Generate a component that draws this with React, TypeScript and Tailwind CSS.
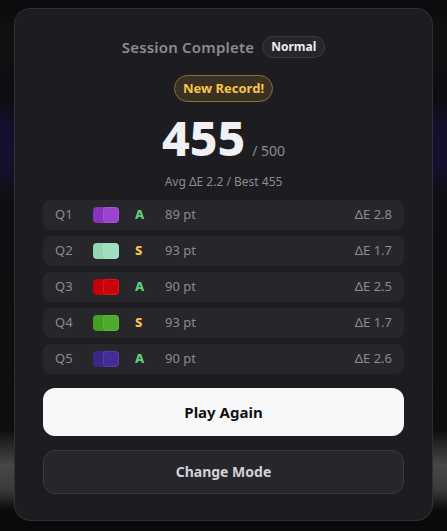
const rounds = [
  { q: "Q1", a: "#8a34bd", b: "#9a44cf", grade: "A", pt: 89, de: "2.8" },
  { q: "Q2", a: "#93d6b1", b: "#a0dfbe", grade: "S", pt: 93, de: "1.7" },
  { q: "Q3", a: "#c40008", b: "#d00008", grade: "A", pt: 90, de: "2.5" },
  { q: "Q4", a: "#44a024", b: "#4eaa2a", grade: "S", pt: 93, de: "1.7" },
  { q: "Q5", a: "#3a2888", b: "#432c96", grade: "A", pt: 90, de: "2.6" },
]

export default function App() {
  return (
    <div
      className="min-h-[531px] w-full bg-[linear-gradient(180deg,#0b0b0d_0px,#111112_40px,#0d0d10_100px,#150f2c_125px,#160f2e_165px,#0f0f11_200px,#0e0e0f_430px,#474747_465px,#3a3a3a_490px,#0a0a0a_510px)] px-[13px] py-2"
      style={{ fontFamily: '"Noto Sans", "Open Sans", sans-serif' }}
    >
      <div className="mx-auto w-[419px] rounded-2xl border border-[#2f2f35] bg-[#1d1d21] px-7 pb-[26px] pt-[27px]">
        {/* Header */}
        <div className="flex items-center justify-center gap-2">
          <h2 className="text-[15px] font-semibold tracking-[0.2px] text-[#8b8b91]">Session Complete</h2>
          <span className="rounded-full border border-[#3a3a41] bg-[#26262b] px-2 py-[2px] text-xs font-bold text-[#ececf0]">
            Normal
          </span>
        </div>

        <div className="mt-4 flex justify-center">
          <span className="rounded-full border border-[#8d7035] bg-[#3b3122] px-2 py-[3px] text-[13px] font-bold text-[#f6c54a]">
            New Record!
          </span>
        </div>

        {/* Score */}
        <div className="mt-[3px] flex items-baseline justify-center gap-[7px]">
          <span className="text-[48px] font-extrabold leading-[66px] text-[#f1f1f5]">455</span>
          <span className="text-sm text-[#8b8b91]">/ 500</span>
        </div>
        <p className="mt-[3px] text-center text-xs text-[#8b8b91]">Avg ΔE 2.2 / Best 455</p>

        {/* Rounds */}
        <div className="mt-[10px] flex flex-col gap-[6px]">
          {rounds.map((r) => (
            <div key={r.q} className="flex h-[30px] items-center rounded-lg bg-[#26262b] px-3 text-[13px] text-[#8b8b91]">
              <span className="w-[38px]">{r.q}</span>
              <span className="relative h-4 w-[26px]">
                <span className="absolute left-0 top-0 h-4 w-4 rounded-[4px]" style={{ backgroundColor: r.a }} />
                <span
                  className="absolute left-[10px] top-0 h-4 w-4 rounded-[4px] border border-white/10"
                  style={{ backgroundColor: r.b }}
                />
              </span>
              <span
                className={
                  r.grade === "S"
                    ? "ml-4 w-[30px] font-extrabold text-[#f6c54a]"
                    : "ml-4 w-[30px] font-extrabold text-[#5ed27b]"
                }
              >
                {r.grade}
              </span>
              <span>{r.pt} pt</span>
              <span className="ml-auto">ΔE {r.de}</span>
            </div>
          ))}
        </div>

        {/* Actions */}
        <button className="mt-[14px] h-12 w-full rounded-xl bg-[#f8f8f8] text-[15px] font-bold text-[#111114]">
          Play Again
        </button>
        <button className="mt-[14px] h-11 w-full rounded-xl border border-[#38383f] bg-[#26262b] text-sm font-bold text-[#d2d2d8]">
          Change Mode
        </button>
      </div>
    </div>
  )
}
